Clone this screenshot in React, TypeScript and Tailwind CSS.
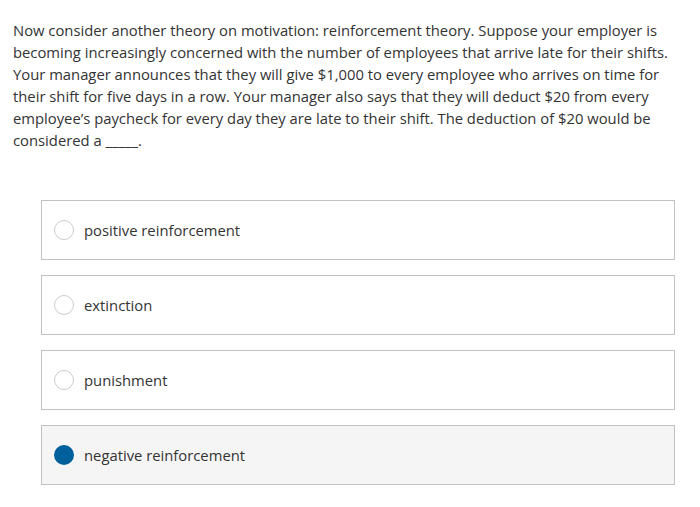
import { useState } from 'react'

const options = ['positive reinforcement', 'extinction', 'punishment', 'negative reinforcement']

export default function App() {
  const [selected, setSelected] = useState(3)

  return (
    <div className="w-[700px] h-[507px] bg-white text-[#333333] font-['Open_Sans',sans-serif]">
      <p className="pl-[13px] pr-[12px] pt-[19px] text-[14.8px] leading-[22px]">
        Now consider another theory on motivation: reinforcement theory. Suppose your employer is becoming increasingly
        concerned with the number of employees that arrive late for their shifts. Your manager announces that they will
        give $1,000 to every employee who arrives on time for their shift for five days in a row. Your manager also says
        that they will deduct $20 from every employee’s paycheck for every day they are late to their shift. The
        deduction of $20 would be considered a _____.
      </p>

      <div className="mt-[49px] ml-[41px] w-[634px] flex flex-col gap-[15px]">
        {options.map((opt, i) => {
          const active = i === selected
          return (
            <button
              key={opt}
              onClick={() => setSelected(i)}
              className={`h-[60px] flex items-center border border-[#c2c2c2] text-left ${
                active ? 'bg-[#f5f5f5]' : 'bg-white'
              }`}
            >
              <span
                className={`ml-[12px] w-[20px] h-[20px] rounded-full shrink-0 ${
                  active ? 'bg-[#00609c]' : 'border border-[#cccccc] bg-white'
                }`}
              />
              <span className="ml-[10px] text-[14.8px] text-[#333333]">{opt}</span>
            </button>
          )
        })}
      </div>
    </div>
  )
}
